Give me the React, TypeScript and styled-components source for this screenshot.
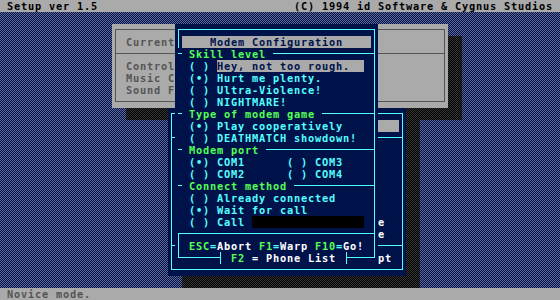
import React from "react";
import styled, { createGlobalStyle, css } from "styled-components";

// text mode grid: 80x25 cells of 7x12 px
const CW = 7;
const RH = 12;

const NAVY = "#00124a";
const CYAN = "#55ffff";
const GREEN = "#55ff55";
const WHITE = "#ffffff";
const GRAY = "#aaaaaa";
const DARK = "#555555";

type Edge = "full" | "down" | "up" | "none";

const edge = (side: "left" | "right", e: Edge, c: string) => {
  if (e === "none") return [];
  const top = e === "down" ? 5 : 0;
  const h = e === "full" ? "100%" : e === "down" ? "7px" : "6px";
  return [`linear-gradient(${c}, ${c}) ${side} 3px top ${top}px / 1px ${h} no-repeat`];
};

// the ░ fill, one light pixel on every other pixel
const dither = (ink: string, paper: string) => css`
  background-color: ${paper};
  background-image: conic-gradient(at 1px 1px, transparent 75%, ${ink} 0),
    conic-gradient(at 1px 1px, transparent 75%, ${ink} 0);
  background-size: 2px 2px, 2px 2px;
  background-position: 0 0, 1px 1px;
`;

const Global = createGlobalStyle`
  html, body { margin: 0; padding: 0; background: #000; }
  body {
    font-family: "DejaVu Sans Mono", "Liberation Mono", monospace;
    font-weight: bold;
    font-size: 10.3px;
    letter-spacing: 0.8px;
    line-height: 12px;
  }
`;

const Screen = styled.div`
  width: 560px;
  height: 300px;
  display: flex;
  flex-direction: column;
  overflow: hidden;
  white-space: pre;
`;

const Bar = styled.div<{ $ink: string }>`
  height: ${RH}px;
  flex: none;
  background: ${GRAY};
  color: ${(p) => p.$ink};
  padding: 0 ${CW}px;
  display: flex;
  justify-content: space-between;
`;

const Desktop = styled.div`
  flex: 1;
  position: relative;
  isolation: isolate;
  ${dither("#626c90", "#00104e")}
`;

const Win = styled.div<{
  $col: number;
  $row: number;
  $cols: number;
  $rows: number;
  $bg: string;
  $shadow?: boolean;
}>`
  position: absolute;
  left: ${(p) => p.$col * CW}px;
  top: ${(p) => (p.$row - 1) * RH}px;
  width: ${(p) => p.$cols * CW}px;
  height: ${(p) => p.$rows * RH}px;
  background: ${(p) => p.$bg};
  display: flex;
  flex-direction: column;
  ${(p) =>
    p.$shadow &&
    css`
      &::before {
        content: "";
        position: absolute;
        left: ${2 * CW}px;
        top: ${RH}px;
        width: 100%;
        height: 100%;
        z-index: -1;
        ${dither("#363636", "#000000")}
      }
    `}
`;

const Row = styled.div<{
  $l?: Edge;
  $r?: Edge;
  $line?: string;
  $pad?: number;
  $padR?: number;
}>`
  height: ${RH}px;
  flex: none;
  display: flex;
  align-items: flex-start;
  padding: 0 ${(p) => p.$padR ?? 3}px 0 ${(p) => p.$pad ?? 3}px;
  background: ${(p) => {
    const c = p.$line ?? CYAN;
    const layers = [...edge("left", p.$l ?? "none", c), ...edge("right", p.$r ?? "none", c)];
    return layers.length ? layers.join(", ") : "none";
  }};
`;

const Rule = styled.span<{ $c?: string; $w?: number }>`
  height: 1px;
  margin-top: 5px;
  background: ${(p) => p.$c ?? CYAN};
  flex: ${(p) => (p.$w ? "none" : "1")};
  width: ${(p) => (p.$w ? `${p.$w}px` : "auto")};
`;

const Tick = styled.span`
  width: 4px;
  height: 1px;
  margin-top: 5px;
  background: ${CYAN};
`;

const Tee = styled.span<{ $side: "left" | "right" }>`
  width: ${CW}px;
  height: ${RH}px;
  flex: none;
  background: linear-gradient(${CYAN}, ${CYAN}) 3px 0 / 1px 100% no-repeat,
    linear-gradient(${CYAN}, ${CYAN}) ${(p) => (p.$side === "left" ? "0" : "3px")} 5px / 4px 1px
      no-repeat;
`;

const Title = styled.div`
  flex: 1;
  background: ${GRAY};
  color: ${NAVY};
  text-align: center;
`;

const Heading = styled.span`
  color: ${GREEN};
  margin: 0 ${CW}px;
`;

const Ink = styled.span<{ $c: string }>`
  color: ${(p) => p.$c};
`;

const Pick = styled.span<{ $hi?: boolean }>`
  color: ${(p) => (p.$hi ? NAVY : CYAN)};
  ${(p) =>
    p.$hi &&
    css`
      background: ${GRAY};
      display: inline-block;
      width: ${21 * CW}px;
    `}
`;

const Cell = styled.div<{ $cols: number }>`
  width: ${(p) => p.$cols * CW}px;
  flex: none;
`;

const Field = styled.span`
  display: inline-block;
  width: ${16 * CW}px;
  height: ${RH}px;
  background: #000;
`;

const MenuBar = styled.div`
  flex: 1;
  height: ${RH}px;
  background: ${GRAY};
`;

const Section: React.FC<{ title: string }> = ({ title }) => (
  <Row $r="full">
    <Tick />
    <Heading>{title}</Heading>
    <Rule />
  </Row>
);

const Choice: React.FC<{ on?: boolean; hi?: boolean; label: string }> = ({ on, hi, label }) => (
  <>
    <Ink $c={CYAN}>{on ? "(•) " : "( ) "}</Ink>
    <Pick $hi={hi}>{label}</Pick>
  </>
);

const Option: React.FC<{ on?: boolean; hi?: boolean; label: string }> = (props) => (
  <Row $r="full" $pad={2 * CW}>
    <Choice {...props} />
  </Row>
);

const App: React.FC = () => (
  <Screen>
    <Global />
    <Bar $ink="#000">
      <span>Setup ver 1.5</span>
      <span>(C) 1994 id Software &amp; Cygnus Studios</span>
    </Bar>
    <Desktop>
      {/* main menu, inactive */}
      <Win $col={16} $row={2} $cols={48} $rows={7} $bg={GRAY} $shadow>
        <Row $l="down" $r="down" $line={DARK}>
          <Rule $c={DARK} />
        </Row>
        <Row $l="full" $r="full" $line={DARK} $pad={2 * CW}>
          <Ink $c={DARK}>Current</Ink>
        </Row>
        <Row $l="full" $r="full" $line={DARK}>
          <Rule $c={DARK} />
        </Row>
        {["Control", "Music C", "Sound F"].map((t) => (
          <Row key={t} $l="full" $r="full" $line={DARK} $pad={2 * CW}>
            <Ink $c={DARK}>{t}</Ink>
          </Row>
        ))}
        <Row $l="up" $r="up" $line={DARK}>
          <Rule $c={DARK} />
        </Row>
      </Win>

      {/* network menu, behind the modem dialog */}
      <Win $col={24} $row={9} $cols={34} $rows={14} $bg={NAVY} $shadow>
        <Row $l="down" $r="down">
          <Rule />
        </Row>
        <Row $l="full" $r="full" $pad={CW} $padR={CW}>
          <MenuBar />
        </Row>
        <Row $l="full" $r="full">
          <Rule />
        </Row>
        {[0, 1, 2, 3, 4, 5].map((i) => (
          <Row key={i} $l="full" $r="full" />
        ))}
        <Row $l="full" $r="full" $pad={30 * CW}>
          <Ink $c={WHITE}>e</Ink>
        </Row>
        <Row $l="full" $r="full" $pad={30 * CW}>
          <Ink $c={WHITE}>e</Ink>
        </Row>
        <Row $l="full" $r="full">
          <Rule />
        </Row>
        <Row $l="full" $r="full" $pad={30 * CW}>
          <Ink $c={WHITE}>pt</Ink>
        </Row>
        <Row $l="up" $r="up">
          <Rule />
        </Row>
      </Win>

      {/* modem configuration dialog */}
      <Win $col={25} $row={2} $cols={29} $rows={20} $bg={NAVY}>
        <Row $l="down" $r="down">
          <Rule />
        </Row>
        <Row $l="full" $r="full" $pad={CW} $padR={CW}>
          <Title>Modem Configuration</Title>
        </Row>
        <Section title="Skill level" />
        <Option hi label="Hey, not too rough." />
        <Option on label="Hurt me plenty." />
        <Option label="Ultra-Violence!" />
        <Option label="NIGHTMARE!" />
        <Section title="Type of modem game" />
        <Option on label="Play cooperatively" />
        <Option label="DEATHMATCH showdown!" />
        <Section title="Modem port" />
        <Row $r="full" $pad={2 * CW}>
          <Cell $cols={14}>
            <Choice on label="COM1" />
          </Cell>
          <Choice label="COM3" />
        </Row>
        <Row $r="full" $pad={2 * CW}>
          <Cell $cols={14}>
            <Choice label="COM2" />
          </Cell>
          <Choice label="COM4" />
        </Row>
        <Section title="Connect method" />
        <Option label="Already connected" />
        <Option on label="Wait for call" />
        <Row $r="full" $pad={2 * CW}>
          <Choice label="Call " />
          <Field />
        </Row>
        <Row $l="down" $r="full">
          <Rule />
        </Row>
        <Row $l="full" $r="full" $pad={2 * CW}>
          <Ink $c={GREEN}>ESC</Ink>
          <Ink $c={CYAN}>=</Ink>
          <Ink $c={WHITE}>Abort </Ink>
          <Ink $c={GREEN}>F1</Ink>
          <Ink $c={CYAN}>=</Ink>
          <Ink $c={WHITE}>Warp </Ink>
          <Ink $c={GREEN}>F10</Ink>
          <Ink $c={CYAN}>=</Ink>
          <Ink $c={WHITE}>Go!</Ink>
        </Row>
        <Row $l="up" $r="up">
          <Rule $w={39} />
          <Tee $side="left" />
          <Ink $c={GREEN}> F2</Ink>
          <Ink $c={WHITE}> = Phone List </Ink>
          <Tee $side="right" />
          <Rule />
        </Row>
      </Win>
    </Desktop>
    <Bar $ink={DARK}>
      <span>Novice mode.</span>
    </Bar>
  </Screen>
);

export default App;
